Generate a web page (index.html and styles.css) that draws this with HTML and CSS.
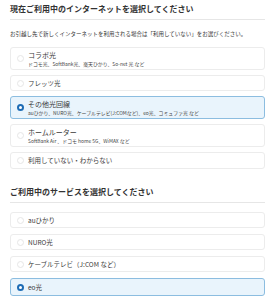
FILE: index.html
```html
<!DOCTYPE html>
<html lang="ja">
<head>
<meta charset="utf-8">
<link rel="stylesheet" href="styles.css">
</head>
<body>
<section class="sec">
  <h2 class="sec-title">現在ご利用中のインターネットを選択してください</h2>
  <p class="note">お引越し先で新しくインターネットを利用される場合は「利用していない」をお選びください。</p>
  <div class="opts">
    <label class="opt two"><span class="radio"></span><span class="txt"><span class="lbl">コラボ光</span><span class="sub">ドコモ光、SoftBank光、楽天ひかり、So-net 光 など</span></span></label>
    <label class="opt"><span class="radio"></span><span class="txt"><span class="lbl">フレッツ光</span></span></label>
    <label class="opt two sel"><span class="radio"></span><span class="txt"><span class="lbl">その他光回線</span><span class="sub">auひかり、NURO光、ケーブルテレビ(J:COMなど)、eo光、コミュファ光 など</span></span></label>
    <label class="opt two"><span class="radio"></span><span class="txt"><span class="lbl">ホームルーター</span><span class="sub">SoftBank Air 、ドコモ home 5G、WiMAX など</span></span></label>
    <label class="opt last"><span class="radio"></span><span class="txt"><span class="lbl">利用していない・わからない</span></span></label>
  </div>
</section>
<section class="sec sec2">
  <h2 class="sec-title">ご利用中のサービスを選択してください</h2>
  <div class="opts opts2">
    <label class="opt"><span class="radio"></span><span class="txt"><span class="lbl">auひかり</span></span></label>
    <label class="opt"><span class="radio"></span><span class="txt"><span class="lbl">NURO光</span></span></label>
    <label class="opt"><span class="radio"></span><span class="txt"><span class="lbl">ケーブルテレビ（J:COM など）</span></span></label>
    <label class="opt sel tall"><span class="radio"></span><span class="txt"><span class="lbl">eo光</span></span></label>
  </div>
</section>
</body>
</html>
```
FILE: styles.css
```css
* { box-sizing: border-box; }
html, body { margin: 0; padding: 0; background: #fff; }
body {
  padding: 0 10px;
  font-family: "Noto Sans CJK JP", "Noto Sans", sans-serif;
  color: #333;
}
.sec-title {
  margin: 0;
  padding: 4px 0 5px;
  font-size: 8px;
  line-height: 10px;
  font-weight: 700;
  color: #333;
  border-bottom: 1px solid #e6e6e6;
}
.note {
  margin: 10px 0 0;
  font-size: 5.5px;
  line-height: 8px;
  color: #333;
}
.opts {
  display: flex;
  flex-direction: column;
  gap: 5px;
  margin-top: 9px;
}
.opt {
  display: flex;
  align-items: center;
  gap: 4px;
  height: 16px;
  padding: 0 0 0 6px;
  border: 1px solid #ececec;
  border-radius: 3px;
  background: #fff;
}
.opt.two { height: 23px; }
.opt.last { height: 17px; }
.opt.tall { height: 18px; }
.opt.sel {
  background: #e9f4fc;
  border-color: #8cbde0;
}
.radio {
  flex: none;
  width: 7px;
  height: 7px;
  border-radius: 50%;
  border: 1px solid #e6e6e6;
  background: #fff;
}
.sel .radio {
  border: 2px solid #1d6cb5;
}
.txt { display: flex; flex-direction: column; }
.lbl {
  font-size: 6.5px;
  line-height: 9px;
  color: #3a3a3a;
}
.two .lbl { font-size: 7px; }
.sub {
  font-size: 4.9px;
  line-height: 7px;
  color: #444;
}
.sec2 { margin-top: 14px; }
.opts2 { margin-top: 9px; gap: 6px; }
```
